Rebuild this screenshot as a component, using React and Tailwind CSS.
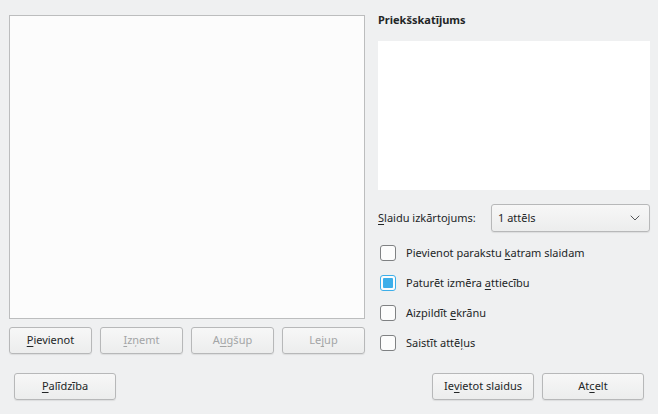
import { ChevronDown } from "lucide-react";

const btn =
  "h-[27px] rounded-[3px] border border-[#b7b8b9] bg-gradient-to-b from-[#f7f7f7] to-[#eceded] shadow-[0_1px_1px_rgba(0,0,0,0.08)] flex items-center justify-center text-[11px] whitespace-nowrap";

function Mn({ children }) {
  return <span className="underline underline-offset-[2px] decoration-1">{children}</span>;
}

function Check({ checked, children }) {
  return (
    <div className="h-[30px] flex items-center pl-[2px]">
      <div
        className={`w-[16px] h-[16px] rounded-[3px] border flex items-center justify-center bg-[#fcfcfc] ${
          checked ? "border-[#3daee9]" : "border-[#7f8183]"
        }`}
      >
        {checked && <div className="w-[10px] h-[10px] bg-[#3daee9] rounded-[1px]" />}
      </div>
      <span className="ml-[10px] text-[11px] whitespace-nowrap">{children}</span>
    </div>
  );
}

export default function App() {
  return (
    <div className="w-[658px] h-[414px] bg-[#eff0f1] text-[#232627] font-['Noto_Sans',sans-serif] flex flex-col overflow-hidden">
      {/* Top area */}
      <div className="flex">
        {/* Left: slide list + buttons */}
        <div className="ml-[9px] mt-[15px] w-[356px] flex flex-col">
          <div className="h-[304px] border border-[#bcbdbe] bg-[#fcfcfc]" />
          <div className="mt-[8px] flex gap-[8px]">
            <button className={`${btn} w-[83px]`}>
              <Mn>P</Mn>ievienot
            </button>
            <button className={`${btn} w-[83px] text-[#a3a5a6]`}>
              <Mn>I</Mn>zņemt
            </button>
            <button className={`${btn} w-[83px] text-[#a3a5a6]`}>
              A<Mn>u</Mn>gšup
            </button>
            <button className={`${btn} w-[83px] text-[#a3a5a6]`}>
              Le<Mn>j</Mn>up
            </button>
          </div>
        </div>

        {/* Right: preview + options */}
        <div className="ml-[13px] w-[272px] flex flex-col">
          <div className="pt-[11px] leading-[18px] text-[11px] font-bold">Priekšskatījums</div>
          <div className="mt-[12px] h-[149px] bg-white" />
          <div className="mt-[14px] h-[28px] flex items-center">
            <span className="text-[11px] whitespace-nowrap">
              <Mn>S</Mn>laidu izkārtojums:
            </span>
            <div className="ml-auto w-[159px] h-[28px] rounded-[3px] border border-[#b7b8b9] bg-gradient-to-b from-[#f7f7f7] to-[#eceded] shadow-[0_1px_1px_rgba(0,0,0,0.08)] flex items-center pl-[6px] pr-[6px] text-[11px]">
              1 attēls
              <ChevronDown size={16} strokeWidth={1.3} className="ml-auto text-[#3b3e40]" />
            </div>
          </div>
          <div className="mt-[6px] flex flex-col">
            <Check>
              Pievienot parakstu <Mn>k</Mn>atram slaidam
            </Check>
            <Check checked>
              Paturēt izmēra <Mn>a</Mn>ttiecību
            </Check>
            <Check>
              Aizpildīt <Mn>e</Mn>krānu
            </Check>
            <Check>
              Saistīt attē<Mn>ļ</Mn>us
            </Check>
          </div>
        </div>
      </div>

      {/* Footer */}
      <div className="mt-[15px] flex px-[14px]">
        <button className={`${btn} w-[102px] h-[26px]`}>
          <Mn>P</Mn>alīdzība
        </button>
        <div className="ml-auto flex gap-[8px]">
          <button className={`${btn} w-[102px] h-[26px]`}>
            Ie<Mn>v</Mn>ietot slaidus
          </button>
          <button className={`${btn} w-[102px] h-[26px]`}>
            At<Mn>c</Mn>elt
          </button>
        </div>
      </div>
    </div>
  );
}
